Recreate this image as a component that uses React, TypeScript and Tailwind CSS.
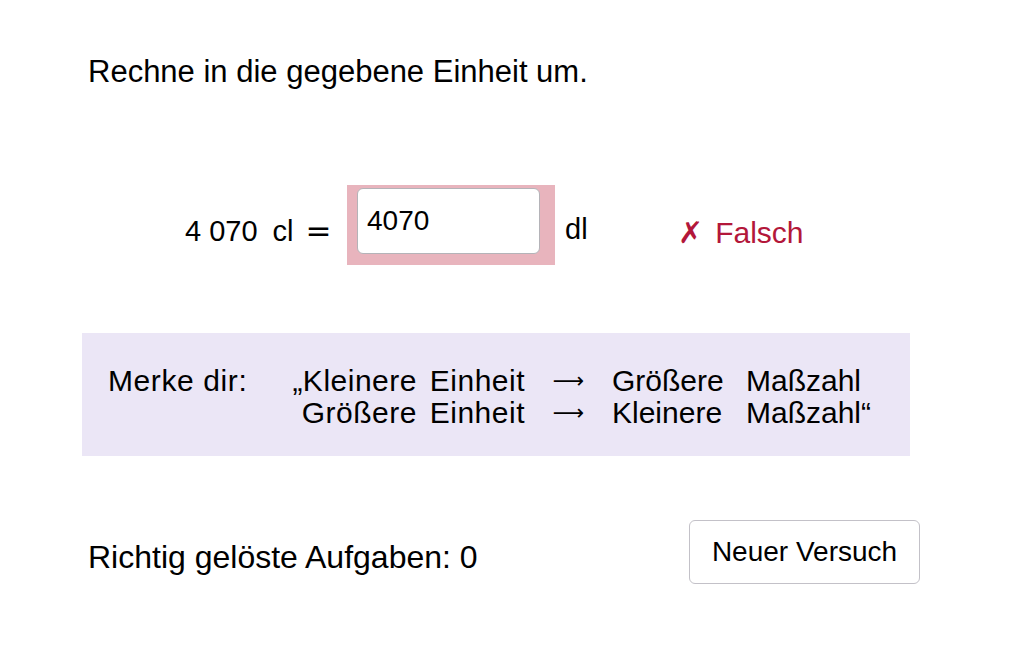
import { useState } from "react";

const sans = "font-['Liberation_Sans',Arial,sans-serif]";

const rows = [
  ["„Kleinere Einheit", "Größere", "Maßzahl"],
  ["Größere Einheit", "Kleinere", "Maßzahl“"],
];

export default function App() {
  const [value, setValue] = useState("4070");

  return (
    <div className={`w-[1032px] h-[645px] bg-white text-black overflow-hidden ${sans}`}>
      <h1 className="pl-[88px] pt-[56px] text-[31px] leading-none font-normal">
        Rechne in die gegebene Einheit um.
      </h1>

      {/* equation row */}
      <div className="mt-[98px] pl-[185px] flex items-start">
        <div className="w-[162px] mt-[30px] flex items-baseline text-[29px] leading-none">
          <span className="whitespace-pre">4 070</span>
          <span className="ml-[15px]">cl</span>
          <span className="ml-[12px] text-[31px] font-['DejaVu_Sans',sans-serif]">=</span>
        </div>
        <div className="bg-[#e8b4bd] pl-[10px] pt-[3px] pr-[15px] pb-[11px]">
          <input
            value={value}
            onChange={(e) => setValue(e.target.value)}
            className="block w-[183px] h-[66px] box-border rounded-[6px] border border-[#b4b3b8] bg-white pl-[9px] text-[28px] leading-none outline-none"
          />
        </div>
        <span className="mt-[30px] ml-[10px] w-[113px] text-[29px] leading-none">dl</span>
        <span className="mt-[33px] flex items-baseline text-[30px] leading-none text-[#b3173a]">
          <span className="font-['DejaVu_Sans',sans-serif] text-[30px] font-bold">✗</span>
          <span className="ml-[12px]">Falsch</span>
        </span>
      </div>

      {/* hint box */}
      <div className="mt-[68px] ml-[82px] w-[828px] h-[123px] bg-[#ebe6f6] pl-[26px] pt-[32px]">
        <div className="grid grid-cols-[170px_247px_87px_134px_auto] text-[30px] leading-[32px]">
          {rows.map((r, i) => (
            <div key={i} className="contents">
              <span className="tracking-[0.6px]">{i === 0 ? "Merke dir:" : ""}</span>
              <span className="text-right [word-spacing:4px] tracking-[0.5px]">{r[0]}</span>
              <span className="text-center text-[22px] font-['DejaVu_Sans',sans-serif]">⟶</span>
              <span>{r[1]}</span>
              <span>{r[2]}</span>
            </div>
          ))}
        </div>
      </div>

      {/* footer */}
      <div className="mt-[64px] pl-[88px] pr-[112px] flex items-start justify-between">
        <span className="mt-[21px] text-[32px] leading-none">Richtig gelöste Aufgaben: 0</span>
        <button className="w-[231px] h-[64px] rounded-[6px] border border-[#c3c1c8] bg-white text-[28px] leading-none">
          Neuer Versuch
        </button>
      </div>
    </div>
  );
}
